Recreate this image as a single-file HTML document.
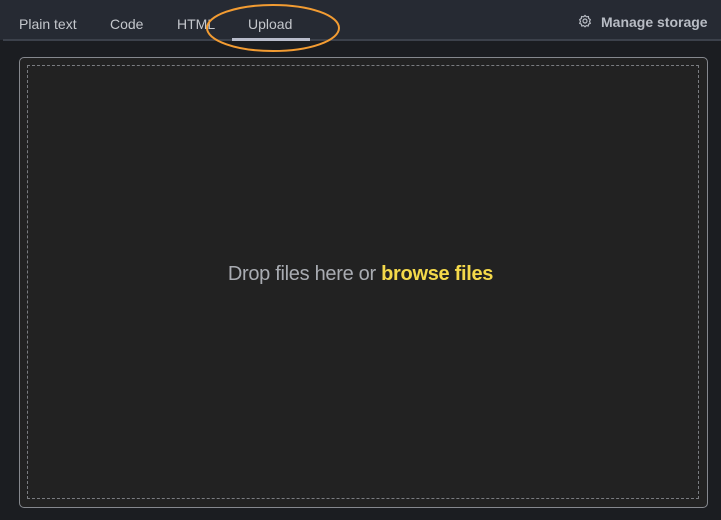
<!DOCTYPE html>
<html><head><style>
body{margin:0;width:721px;height:520px;background:#1b1d21;font-family:"Liberation Sans",sans-serif;position:relative;overflow:hidden}
.hdr{position:absolute;left:0;top:0;width:721px;height:40px;background:#262a33}
.line{position:absolute;left:3px;top:39px;width:718px;height:2px;background:#3c414b}
.tab{position:absolute;top:16px;font-size:14px;color:#c4c7cc}
.ul{position:absolute;left:232px;top:38px;width:78px;height:3px;background:#b8bccb}
.ms{position:absolute;left:601px;top:14px;font-size:14px;font-weight:bold;color:#b8bcc4}
.box{position:absolute;left:19px;top:57px;width:687px;height:449px;border:1px solid #85888e;border-radius:5px;background:#222222}
.dash{position:absolute;left:27px;top:65px;width:670px;height:432px;border:1px dashed #7a7c80}
.txt{position:absolute;left:0;width:721px;top:263px;text-align:center;font-size:20px;color:#a9acb2;letter-spacing:-0.3px}
.txt b{color:#f4d94a;font-weight:600}
</style></head><body>
<div class="hdr"></div><div class="line"></div>
<div class="tab" style="left:19px">Plain text</div>
<div class="tab" style="left:110px">Code</div>
<div class="tab" style="left:177px">HTML</div>
<div class="tab" style="left:248px">Upload</div>
<div class="ul"></div>
<svg style="position:absolute;left:0;top:0" width="721" height="60"><ellipse cx="273" cy="28" rx="66" ry="23" fill="none" stroke="#f39c32" stroke-width="2"/>
<g transform="translate(585,21)" fill="none" stroke="#b8bcc4" stroke-width="1.2"><circle r="2"/><path d="M0-5.5L1.4-4.2 3.4-4.5 3.7-2.6 5.3-1.3 4.5 0.5 5.3 2.3 3.6 3.2 3.2 5 1.3 4.6 0 5.8-1.3 4.6-3.2 5-3.6 3.2-5.3 2.3-4.5 0.5-5.3-1.3-3.7-2.6-3.4-4.5-1.4-4.2Z"/></g></svg>
<div class="ms">Manage storage</div>
<div class="box"></div><div class="dash"></div>
<div class="txt">Drop files here or <b>browse files</b></div>
</body></html>
